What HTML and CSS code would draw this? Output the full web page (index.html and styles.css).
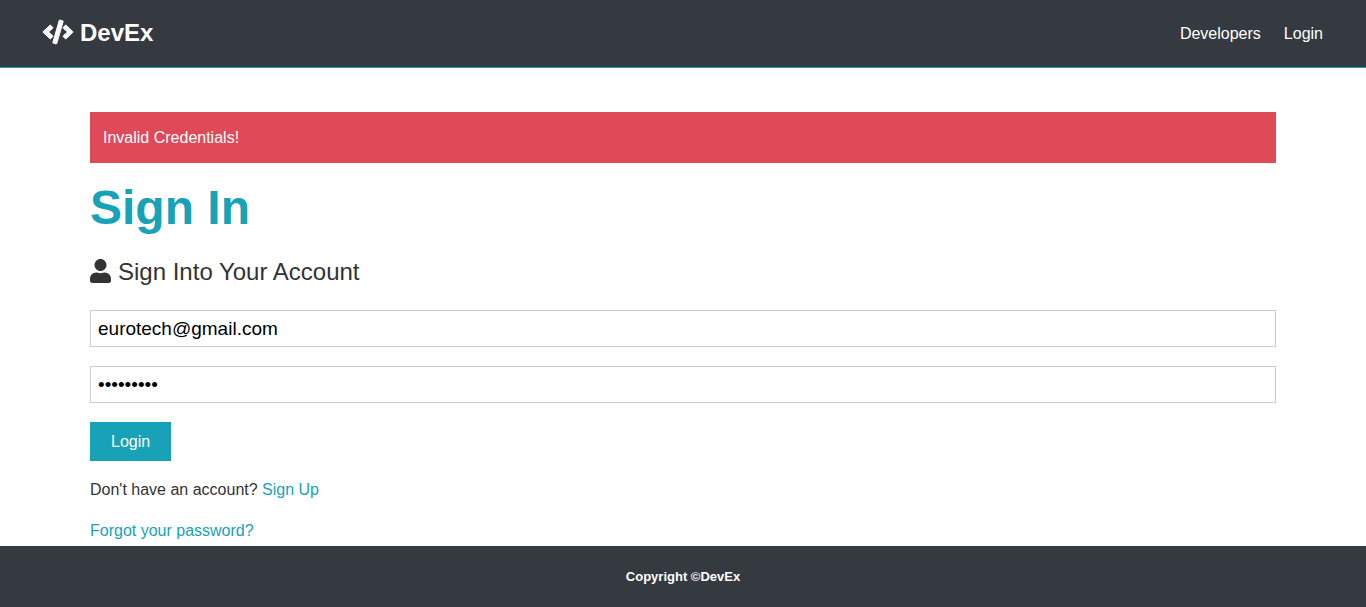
FILE: index.html
```
<!DOCTYPE html>
<html lang="en">
<head>
<meta charset="utf-8">
<meta name="viewport" content="width=device-width, initial-scale=1">
<title>DevEx</title>
<link rel="stylesheet" href="styles.css">
</head>
<body>
<header class="navbar">
  <h1 class="brand">
    <a class="brand-link" href="#">
      <svg class="brand-icon" viewBox="0 0 640 512" aria-hidden="true"><path fill="currentColor" stroke="currentColor" stroke-width="20" d="M278.9 511.500l-61-17.700c-6.400-1.800-10-8.500-8.200-14.900L346.200 8.700c1.800-6.400 8.500-10 14.900-8.200l61 17.700c6.400 1.800 10 8.500 8.200 14.900L293.800 503.300c-1.900 6.400-8.500 10.100-14.900 8.200zm-114-112.200l43.500-46.400c4.600-4.900 4.300-12.700-.8-17.200L117 256l90.600-79.700c5.100-4.500 5.500-12.300.8-17.200l-43.500-46.400c-4.500-4.800-12.100-5.100-17-.5L3.800 247.200c-5.100 4.700-5.100 12.800 0 17.500l144.100 135.100c4.900 4.600 12.500 4.400 17-.5zm327.200.6l144.100-135.100c5.100-4.700 5.100-12.800 0-17.500L492.100 112.100c-4.800-4.500-12.400-4.300-17 .5L431.600 159c-4.600 4.900-4.300 12.700.8 17.200L523 256l-90.600 79.700c-5.100 4.500-5.500 12.300-.8 17.200l43.500 46.400c4.500 4.900 12.100 5.100 17 .6z"/></svg>
      <span>DevEx</span>
    </a>
  </h1>
  <nav class="nav">
    <a class="nav-link" href="#">Developers</a>
    <a class="nav-link" href="#">Login</a>
  </nav>
</header>
<main class="container">
  <div class="alert" role="alert">Invalid Credentials!</div>
  <h2 class="title">Sign In</h2>
  <p class="lead">
    <svg class="lead-icon" viewBox="0 0 448 512" aria-hidden="true"><path fill="currentColor" d="M224 256c70.700 0 128-57.300 128-128S294.700 0 224 0 96 57.300 96 128s57.300 128 128 128zm89.600 32h-16.700c-22.200 10.200-46.900 16-72.900 16s-50.600-5.800-72.900-16h-16.700C60.200 288 0 348.200 0 422.400V464c0 26.500 21.500 48 48 48h352c26.500 0 48-21.500 48-48v-41.600c0-74.200-60.200-134.400-134.400-134.400z"/></svg>
    <span>Sign Into Your Account</span>
  </p>
  <form class="form">
    <input class="field" type="email" value="eurotech@gmail.com" placeholder="Email Address" aria-label="Email Address">
    <input class="field" type="password" value="password1" placeholder="Password" aria-label="Password">
    <button class="button" type="submit">Login</button>
  </form>
  <p class="note">Don't have an account? <a class="link" href="#">Sign Up</a></p>
  <p class="note"><a class="link" href="#">Forgot your password?</a></p>
</main>
<footer class="footer">Copyright ©DevEx</footer>
</body>
</html>
```
FILE: styles.css
```
* {
  box-sizing: border-box;
  margin: 0;
  padding: 0;
}

body {
  display: flex;
  flex-direction: column;
  min-height: 100vh;
  background: #fff;
  color: #333;
  font: 16px/26px "Liberation Sans", Arial, sans-serif;
}

a {
  color: inherit;
  text-decoration: none;
}

.navbar {
  display: flex;
  align-items: center;
  justify-content: space-between;
  padding: 11px 43px 12px;
  border-bottom: 1px solid #17a2b8;
  background: #343a40;
  color: #fff;
}

.brand {
  font-size: 24px;
  line-height: 44px;
}

.brand-link {
  display: flex;
  align-items: center;
  gap: 7px;
}

.brand-icon {
  width: 30px;
  height: 24px;
  margin-bottom: 2px;
  overflow: visible;
}

.nav {
  display: flex;
  gap: 23px;
  padding-top: 2px;
}

.container {
  padding: 44px 90px 0;
}

.alert {
  padding: 13px 13px 12px;
  margin-bottom: 16px;
  background: #df4958;
  color: #fff;
}

.title {
  margin-bottom: 16px;
  color: #17a2b8;
  font-size: 48px;
  line-height: 58px;
}

.lead {
  display: flex;
  align-items: center;
  gap: 7px;
  margin-bottom: 20px;
  font-size: 24px;
  line-height: 37px;
}

.lead-icon {
  width: 21px;
  height: 24px;
  margin-bottom: 2px;
}

.form {
  display: flex;
  flex-direction: column;
  align-items: flex-start;
  gap: 19px;
  margin-bottom: 16px;
}

.field {
  width: 100%;
  height: 37px;
  padding: 0 7px;
  border: 1px solid #ccc;
  background: #fff;
  color: #000;
  font: 19px "Liberation Sans", Arial, sans-serif;
}

.button {
  padding: 7px 21px 6px;
  border: 0;
  background: #17a2b8;
  color: #fff;
  font: inherit;
  cursor: pointer;
}

.note + .note {
  margin-top: 15px;
}

.link {
  color: #17a2b8;
}

.footer {
  margin-top: auto;
  padding: 20px;
  background: #343a40;
  color: #fff;
  font-size: 13px;
  font-weight: bold;
  line-height: 21px;
  text-align: center;
}
```
